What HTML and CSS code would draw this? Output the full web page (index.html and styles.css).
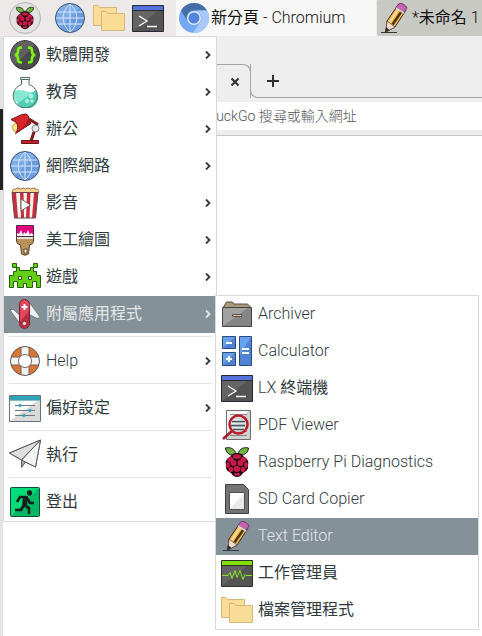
FILE: index.html
```
<!DOCTYPE html>
<html lang="zh-Hant">
<head>
    <meta charset="UTF-8">
    <meta name="viewport" content="width=device-width, initial-scale=1.0">
    <title>Raspberry Pi Desktop</title>
    <link rel="stylesheet" href="styles.css">
</head>
<body>
    <!-- Icons -->
    <svg class="sprite" aria-hidden="true">
        <symbol id="i-raspberry" viewBox="0 0 32 32">
            <path d="M15.500 8.500C10 10 5 8 4.500 2c4-1 9 0 11 6.500zM16.500 8.500C22 10 27 8 27.500 2c-4-1-9 0-11 6.500z" fill="#72b048" stroke="#17240f"/>
            <path d="M16 7c4 0 6 2 7 4 4 2 5 5 4 8 1 5-3 7-5 8-2 3-4 4-6 4s-4-1-6-4c-2-1-6-3-5-8-1-3 0-6 4-8 1-2 3-4 7-4z" fill="#26040f"/>
            <g fill="#c51a4a">
                <ellipse cx="16" cy="10.500" rx="4" ry="2.300"/>
                <ellipse cx="9.500" cy="13.500" rx="3" ry="2.500"/>
                <ellipse cx="22.500" cy="13.500" rx="3" ry="2.500"/>
                <ellipse cx="12.500" cy="17" rx="3" ry="3"/>
                <ellipse cx="19.500" cy="17" rx="3" ry="3"/>
                <ellipse cx="7" cy="19" rx="1.800" ry="3"/>
                <ellipse cx="25" cy="19" rx="1.800" ry="3"/>
                <ellipse cx="16" cy="23" rx="3.400" ry="3"/>
                <ellipse cx="10" cy="23.500" rx="2.200" ry="2.800"/>
                <ellipse cx="22" cy="23.500" rx="2.200" ry="2.800"/>
                <ellipse cx="16" cy="28.300" rx="3" ry="1.500"/>
            </g>
        </symbol>
        <symbol id="i-globe" viewBox="0 0 32 32">
            <circle cx="16" cy="16" r="14.500" fill="#6b9bdd"/>
            <path d="M5.500 26A14.500 14.500 0 0 1 26 5.500z" fill="#7fade8"/>
            <path d="M16 2v28M2 16h28M4 10h24M4 22h24M16 2c-9 8-9 20 0 28M16 2c9 8 9 20 0 28" fill="none" stroke="#d7e6fa"/>
            <circle cx="16" cy="16" r="14.500" fill="none" stroke="#3c5878"/>
        </symbol>
        <symbol id="i-folders" viewBox="0 0 32 32">
            <g fill="#f9dd94" stroke="#d3b879">
                <path d="M.5 3.500H5l2 2h16.500v18H.5z"/>
                <path d="M8.500 9.500H13l2 2h16.500v17h-23z"/>
            </g>
        </symbol>
        <symbol id="i-terminal" viewBox="0 0 32 32">
            <path d="M.5 3.500h31v26H.5z" fill="#545454"/>
            <path d="M1 29L27 8H1z" fill="#656565"/>
            <path d="M.5 3.500h31v5H.5z" fill="#5673dc"/>
            <path d="M.5 3.500h31v26H.5zM1 8.500h30" fill="none" stroke="#282b35"/>
            <path d="M7 14l8 5-8 5M15 24.500h10" fill="none" stroke="#fff" stroke-width="1.300"/>
        </symbol>
        <symbol id="i-chromium" viewBox="0 0 32 32">
            <circle cx="16" cy="16" r="15" fill="#75a7f3"/>
            <path d="M3 8.500A15 15 0 0 1 29 8.500H16a7.500 7.500 0 0 0-7.200 9.500z" fill="#446ea8"/>
            <path d="M29 8.500A15 15 0 0 1 15 31l7.500-11.500A7.500 7.500 0 0 0 16 8.500z" fill="#a9c9fb"/>
            <circle cx="16" cy="16" r="7" fill="#dce8fb"/>
            <circle cx="16" cy="16" r="5.500" fill="#5283de"/>
        </symbol>
        <symbol id="i-pencil" viewBox="0 0 32 32">
            <path d="M2 30.500h16" stroke="#34383a"/>
            <path d="M8 19L19 3l8 5-11 17-9 5z" fill="#f2b850" stroke="#3a2a1c"/>
            <path d="M13.500 22.500l11-16" stroke="#4a3216" stroke-width="2.500"/>
            <path d="M10.500 20.500l10-15" stroke="#ffdc93" stroke-width="2"/>
            <path d="M8 19l8 6-9 5z" fill="#f1dccb" stroke="#5b4634" stroke-width=".7"/>
            <path d="M7 25l3.500 3-4.500 2.500z" fill="#292a2c"/>
            <path d="M17 5.500l2-3q2-2 5-.5t4 4l-3 4.500z" fill="#c763b1" stroke="#713562"/>
            <path d="M17 6l8 5" stroke="#d5d7cf" stroke-width="1.500"/>
        </symbol>
        <symbol id="i-code" viewBox="0 0 32 32">
            <circle cx="16" cy="16" r="14.500" fill="#4a4a4a" stroke="#303030"/>
            <path d="M6 26A14 14 0 0 1 26 6z" fill="#606060"/>
            <path d="M13 8.500c-4 0-4 1-4 4 0 2-.5 3-3 3.500 2.500.5 3 1.500 3 3.500 0 3 0 4 4 4M19 8.500c4 0 4 1 4 4 0 2 .5 3 3 3.500-2.500.5-3 1.500-3 3.500 0 3 0 4-4 4" fill="none" stroke="#7af50c" stroke-width="2.600"/>
        </symbol>
        <symbol id="i-flask" viewBox="0 0 32 32">
            <path d="M12.500 4v4.500A12 12 0 1 0 20 8.500V4" fill="#fff"/>
            <path d="M5 15q5-2 11 0t11 0A11.500 11.500 0 1 1 5 15z" fill="#86ead3"/>
            <path d="M8 28L27 14A11.500 11.500 0 0 1 8 28z" fill="#55cfb4"/>
            <path d="M12.500 4v4.500A12 12 0 1 0 20 8.500V4M11.500 1.500h9v2h-9z" fill="none" stroke="#4c6b66"/>
            <g fill="#a9f1df" stroke="#d7fff5" stroke-width=".5"><circle cx="22" cy="20" r="2"/><circle cx="18" cy="25" r="1.700"/><circle cx="23" cy="25" r="1.300"/></g>
        </symbol>
        <symbol id="i-lamp" viewBox="0 0 32 32">
            <path d="M20 6l8 5-2 5-4 12" fill="none" stroke="#7e1c20" stroke-width="3"/>
            <circle cx="8" cy="14.500" r="4.500" fill="#ffe986" stroke="#ab974b"/>
            <path d="M2 6.500L13 1.500q5-1.500 6 1l3 8L6.500 20.500q4-6 1-11z" fill="#d62529" stroke="#741619"/>
            <path d="M7 20L21.500 10.500l-2-5q-3 8-12.500 14z" fill="#a51d21"/>
            <circle cx="26.500" cy="15.500" r="3.500" fill="#e9e9e9" stroke="#7e8082"/>
            <path d="M12.500 27.500h17v3h-17z" fill="#c52428" stroke="#67161a"/>
        </symbol>
        <symbol id="i-popcorn" viewBox="0 0 32 32">
            <path d="M3.500 6q-1-4 3-4 2-2 5 0 3-2 5 0 3-2 5 0 3-2 5 0 4 0 3 4z" fill="#f7d597" stroke="#987046"/>
            <path d="M3 5.500h26L26.500 31h-21z" fill="#faf4ef"/>
            <path d="M3 5.500h4L9 31H5.500zM11 5.500h3.500L15 31h-3zM18 5.500h3.500L20.500 31H17zM25 5.500h4L26.500 31H23z" fill="#c72e3d"/>
            <path d="M3 5.500h26L26.500 31h-21z" fill="none" stroke="#694347"/>
            <path d="M12 12l9.500 6-9.500 6z" fill="#fff" stroke="#6d6261"/>
        </symbol>
        <symbol id="i-brush" viewBox="0 0 32 32">
            <path d="M7.500 12h17v5q0 3-4 4l-1 9q-3.500 2.500-7 0l-1-9q-4-1-4-4z" fill="#b9915d" stroke="#5b432a"/>
            <path d="M7.500 1.500h17v11h-17z" fill="#fff" stroke="#522943"/>
            <path d="M8 2h16v8l-2-1-1 2-2-5-2 4-2-2-1 3-2-5-2 4-2-1z" fill="#e20080"/>
            <path d="M8 13h16v2H8z" fill="#e4ded4"/>
            <path d="M15 25h3v4h-3z" fill="#fff" stroke="#5b432a"/>
        </symbol>
        <symbol id="i-invader" viewBox="0 0 32 32">
            <path d="M3.500 2.500h4v4h3v3h11v-3h3v-4h4v4h-4v4h3v4h4v12h-4v-6h-4v6h-6v-4h-3v4h-6v-6h-4v6h-4v-12h4v-4h3v-4h-4z" fill="#63cf18" stroke="#286009"/>
            <path d="M9.500 15.500h3v3h-3zM19.500 15.500h3v3h-3z" fill="#fff" stroke="#275b0b"/>
        </symbol>
        <symbol id="i-knife" viewBox="0 0 32 32">
            <path d="M.5 11.500h4l7 6.500v8.500zM20 4l11.500 15.500-3.500 1-8-4z" fill="#edf0f1" stroke="#71797e"/>
            <rect x="10.500" y="1.500" width="10" height="29" rx="5" fill="#e2475b" stroke="#76222d"/>
            <path d="M11 24l9-11v13q-1 4-5 4-3 0-4-4z" fill="#b52e40"/>
            <path d="M15.500 6v6M12.500 9h6" stroke="#fff" stroke-width="2"/>
            <circle cx="15.500" cy="25.500" r="1.700" fill="#e6dcdc"/>
        </symbol>
        <symbol id="i-lifebuoy" viewBox="0 0 32 32">
            <circle cx="16" cy="16" r="10.500" fill="none" stroke="#d87537" stroke-width="8"/>
            <path d="M12 1.500h8v9h-8zM12 21.500h8v9h-8zM1.500 12h9v8h-9zM21.500 12h9v8h-9z" fill="#f3f3f1"/>
            <path d="M12 2v9M20 2v9M12 21v9M20 21v9M2 12h9M2 20h9M21 12h9M21 20h9" stroke="#756458"/>
            <circle cx="16" cy="16" r="14.500" fill="none" stroke="#625b56"/>
            <circle cx="16" cy="16" r="6.500" fill="#fff" stroke="#736b65"/>
        </symbol>
        <symbol id="i-prefs" viewBox="0 0 32 32">
            <path d="M.5 3.500h31v26H.5z" fill="#dadada"/>
            <path d="M1 29L28 9H1z" fill="#fff"/>
            <path d="M.5 3.500h31v5H.5z" fill="#31a1b9"/>
            <path d="M.5 3.500h31v26H.5z" fill="none" stroke="#65757a"/>
            <path d="M6 13.500h20M6 18.500h20M6 23.500h20" stroke="#68777b"/>
            <circle cx="11" cy="13.500" r="1.700" fill="#34a8c1"/><circle cx="21" cy="18.500" r="1.700" fill="#34a8c1"/><circle cx="15" cy="23.500" r="1.700" fill="#34a8c1"/>
        </symbol>
        <symbol id="i-plane" viewBox="0 0 32 32">
            <path d="M31.500 1L.5 14l12 7 14 7z" fill="#f1f1f1" stroke="#565656"/>
            <path d="M31.500 1l-19 20v7.500l4-5.500" fill="#aaa" stroke="#565656"/>
            <path d="M31.500 1l-19 20 14 7z" fill="#f3f3f3" stroke="#565656"/>
            <path d="M31.500 1l-19 20L.5 14z" fill="#ddd" stroke="#565656"/>
        </symbol>
        <symbol id="i-exit" viewBox="0 0 32 32">
            <rect x="1.500" y="1.500" width="29" height="29" rx="1" fill="#00b863"/>
            <path d="M2 30V2h28z" fill="#00dc78"/>
            <rect x="1.500" y="1.500" width="29" height="29" rx="1" fill="none" stroke="#154b35"/>
            <circle cx="20.500" cy="7" r="2.700" fill="#12231d"/>
            <path d="M17 11l-6 0-3 5M17 11l-2 8 5 3v6M15 19l-3 5H6M18 12l3 5h4" fill="none" stroke="#12231d" stroke-width="2.700"/>
            <path d="M14 10h5l-1 10h-5z" fill="#12231d"/>
        </symbol>
        <symbol id="i-archive" viewBox="0 0 32 32">
            <path d="M2.500 9l3-5h6l1 2h14l3 3v5h-27z" fill="#aa9a7c" stroke="#544b3c"/>
            <path d="M1.500 9.500h29v19h-29z" fill="#858585"/>
            <path d="M2 28L27 10H2z" fill="#a2a2a2"/>
            <path d="M1.500 9.500h29v19h-29z" fill="none" stroke="#444"/>
            <path d="M11.500 16.500h9v2h-9z" fill="#d2c3a0" stroke="#5f5542"/>
        </symbol>
        <symbol id="i-calc" viewBox="0 0 32 32">
            <path d="M1.500 1.500h13v12h-13zM1.500 17.500h13v13h-13zM18.500 1.500h12v29h-12z" fill="#4f82d2"/>
            <path d="M2 13V2h12zM2 30V18h12zM19 20V2h11z" fill="#68a0ee"/>
            <path d="M1.500 1.500h13v12h-13zM1.500 17.500h13v13h-13zM18.500 1.500h12v29h-12z" fill="none" stroke="#254b82"/>
            <path d="M5 8h6M5 24h6M8 21v6M21 14h7M21 18h7" stroke="#fff" stroke-width="2"/>
        </symbol>
        <symbol id="i-pdf" viewBox="0 0 32 32">
            <path d="M5.500 1.500h24v29h-24z" fill="#d2d2d2" stroke="#6d6d6d"/>
            <path d="M6 28V2h21z" fill="#f7f7f7"/>
            <path d="M9 5.500h17M9 9.500h17M9 13.500h17M9 17.500h17M9 22.500h17M9 26.500h17" stroke="#858585"/>
            <circle cx="17.500" cy="15.500" r="9" fill="#e3eaeb" fill-opacity=".7"/>
            <path d="M11 12.500h13M10 16.500h14M12 20.500h11" stroke="#48535b" stroke-width="1.500"/>
            <path d="M11 22l-9 8" stroke="#a91c26" stroke-width="2.600"/>
            <circle cx="17.500" cy="15.500" r="9" fill="none" stroke="#bd1d29" stroke-width="2.500"/>
        </symbol>
        <symbol id="i-sd" viewBox="0 0 32 32">
            <path d="M4.500 1.500h18l5 5v24h-23z" fill="#747474" stroke="#404040"/>
            <path d="M8.500 9.500h15v17h-15z" fill="#e9e9e9" stroke="#505050"/>
            <path d="M9 26V10h14z" fill="#fff"/>
        </symbol>
        <symbol id="i-monitor" viewBox="0 0 32 32">
            <path d="M.5 3.500h31v26H.5z" fill="#545454"/>
            <path d="M1 29L27 8H1z" fill="#646464"/>
            <path d="M.5 3.500h31v5H.5z" fill="#82de0c"/>
            <path d="M.5 3.500h31v26H.5zM1 8.500h30" fill="none" stroke="#293024"/>
            <path d="M1 18.500h6l2-3 2 6 3-8 2 7 3-7 3 9 2-5 1 1h6" fill="none" stroke="#86e916"/>
        </symbol>
        <symbol id="i-arrow" viewBox="0 0 8 8">
            <path d="M2 .5L5.500 4 2 7.500" fill="none" stroke="currentColor" stroke-width="1.800"/>
        </symbol>
    </svg>

    <header class="taskbar">
        <nav class="launchers">
            <button class="start" aria-label="Menu"><svg class="berry"><use href="#i-raspberry"/></svg></button>
            <button aria-label="Web Browser"><svg class="icon"><use href="#i-globe"/></svg></button>
            <button aria-label="File Manager"><svg class="icon"><use href="#i-folders"/></svg></button>
            <button aria-label="Terminal"><svg class="icon"><use href="#i-terminal"/></svg></button>
        </nav>
        <button class="task"><svg class="icon"><use href="#i-chromium"/></svg><span><span class="zh">新分頁</span> - Chromium</span></button>
        <button class="task active"><svg class="icon"><use href="#i-pencil"/></svg><span>*<span class="zh">未命名</span> 1</span></button>
    </header>

    <main class="desktop">
        <section class="browser">
            <div class="tabs">
                <div class="tab">
                    <button aria-label="Close tab"><svg class="glyph" viewBox="0 0 12 12"><path d="M2.500 2.500l7 7M9.500 2.500l-7 7"/></svg></button>
                </div>
                <div class="tab-rest">
                    <button aria-label="New tab"><svg class="glyph" viewBox="0 0 12 12"><path d="M6 0v12M0 6h12"/></svg></button>
                </div>
            </div>
            <div class="toolbar">
                <input class="address" type="text" aria-label="網址" placeholder="DuckGo 搜尋或輸入網址">
            </div>
            <div class="page"></div>
        </section>

        <ul class="menu main-menu">
            <li><button><svg class="icon"><use href="#i-code"/></svg><span class="zh">軟體開發</span><svg class="arrow"><use href="#i-arrow"/></svg></button></li>
            <li><button><svg class="icon"><use href="#i-flask"/></svg><span class="zh">教育</span><svg class="arrow"><use href="#i-arrow"/></svg></button></li>
            <li><button><svg class="icon"><use href="#i-lamp"/></svg><span class="zh">辦公</span><svg class="arrow"><use href="#i-arrow"/></svg></button></li>
            <li><button><svg class="icon"><use href="#i-globe"/></svg><span class="zh">網際網路</span><svg class="arrow"><use href="#i-arrow"/></svg></button></li>
            <li><button><svg class="icon"><use href="#i-popcorn"/></svg><span class="zh">影音</span><svg class="arrow"><use href="#i-arrow"/></svg></button></li>
            <li><button><svg class="icon"><use href="#i-brush"/></svg><span class="zh">美工繪圖</span><svg class="arrow"><use href="#i-arrow"/></svg></button></li>
            <li><button><svg class="icon"><use href="#i-invader"/></svg><span class="zh">遊戲</span><svg class="arrow"><use href="#i-arrow"/></svg></button></li>
            <li><button class="selected"><svg class="icon"><use href="#i-knife"/></svg><span class="zh">附屬應用程式</span><svg class="arrow"><use href="#i-arrow"/></svg></button></li>
            <li class="group"><button><svg class="icon"><use href="#i-lifebuoy"/></svg>Help<svg class="arrow"><use href="#i-arrow"/></svg></button></li>
            <li class="group"><button><svg class="icon"><use href="#i-prefs"/></svg><span class="zh">偏好設定</span><svg class="arrow"><use href="#i-arrow"/></svg></button></li>
            <li class="group"><button><svg class="icon"><use href="#i-plane"/></svg><span class="zh">執行</span></button></li>
            <li class="group"><button><svg class="icon"><use href="#i-exit"/></svg><span class="zh">登出</span></button></li>
        </ul>

        <ul class="menu sub-menu">
            <li><button><svg class="icon"><use href="#i-archive"/></svg>Archiver</button></li>
            <li><button><svg class="icon"><use href="#i-calc"/></svg>Calculator</button></li>
            <li><button><svg class="icon"><use href="#i-terminal"/></svg><span>LX <span class="zh">終端機</span></span></button></li>
            <li><button><svg class="icon"><use href="#i-pdf"/></svg>PDF Viewer</button></li>
            <li><button><svg class="icon"><use href="#i-raspberry"/></svg>Raspberry Pi Diagnostics</button></li>
            <li><button><svg class="icon"><use href="#i-sd"/></svg>SD Card Copier</button></li>
            <li><button class="selected"><svg class="icon"><use href="#i-pencil"/></svg>Text Editor</button></li>
            <li><button><svg class="icon"><use href="#i-monitor"/></svg><span class="zh">工作管理員</span></button></li>
            <li><button><svg class="icon"><use href="#i-folders"/></svg><span class="zh">檔案管理程式</span></button></li>
        </ul>
    </main>
</body>
</html>
```
FILE: styles.css
```
* {
    box-sizing: border-box;
}

body {
    margin: 0;
    min-height: 100vh;
    display: flex;
    flex-direction: column;
    overflow: hidden;
    font-family: Roboto, "Noto Sans CJK TC", sans-serif;
    font-size: 16px;
    font-weight: 300;
    line-height: 20px;
    color: #2f3a3e;
    background-color: #fff;
}

button {
    font: inherit;
    color: inherit;
    background: none;
    border: 0;
    padding: 0;
    display: flex;
    align-items: center;
}

.zh {
    font-weight: 400;
}

.sprite {
    position: absolute;
    width: 0;
    height: 0;
}

.icon {
    width: 32px;
    height: 32px;
    flex: none;
}

/* Taskbar */

.taskbar {
    display: flex;
    height: 36px;
    background-color: #ede9e8;
    overflow: hidden;
}

.launchers {
    flex: none;
    display: flex;
    align-items: center;
    gap: 7px;
    padding: 0 12px 0 9px;
}

.start {
    width: 32px;
    height: 32px;
    margin-right: 6px;
    justify-content: center;
    background-color: #e2e2e2;
    border: 1px solid #b3b3b3;
    border-radius: 50%;
}

.berry {
    width: 24px;
    height: 26px;
}

.task {
    flex: 0 0 200px;
    gap: 1px;
    padding: 0 2px;
    color: #111;
    background-color: #f8f7f7;
    white-space: nowrap;
}

.task.active {
    margin-left: 1px;
    background-color: #c9c9c4;
    border-radius: 2px;
}

/* Browser window */

.desktop {
    position: relative;
    flex: 1;
    display: flex;
    background: linear-gradient(#e4e4e4 73px, #222 73px, #222 154px, #e4e4e4 154px);
}

.browser {
    flex: 1;
    margin-left: 3px;
    display: flex;
    flex-direction: column;
    background-color: #eee;
}

.tabs {
    display: flex;
    height: 62px;
    padding-top: 28px;
}

.tab {
    flex: 0 0 248px;
    display: flex;
    align-items: center;
    justify-content: flex-end;
    padding-right: 9px;
    border: 1px solid #a3a3a3;
    border-width: 1px 1px 0 0;
    border-radius: 0 8px 0 0;
}

.tab-rest {
    flex: 1;
    display: flex;
    align-items: center;
    padding-left: 16px;
    margin-left: -1px;
    border: 1px solid #a3a3a3;
    border-width: 0 0 1px 1px;
    border-radius: 0 0 0 8px;
}

.glyph {
    width: 12px;
    height: 12px;
    fill: none;
    stroke: #2b3235;
    stroke-width: 2;
}

.toolbar {
    padding: 4px 0 5px;
    border-bottom: 1px solid #c4c4c4;
}

.address {
    display: block;
    width: 100%;
    height: 28px;
    padding: 0 0 0 204px;
    border: 0;
    font: inherit;
    font-size: 14px;
    background-color: #fff;
}

.address::placeholder {
    color: #555;
}

.page {
    flex: 1;
    background-color: #fff;
}

/* Menus */

.menu {
    position: absolute;
    margin: 0;
    padding: 0;
    list-style: none;
    background-color: #fff;
    border: 1px solid #d9dada;
}

.main-menu {
    top: 0;
    left: 3px;
    width: 214px;
}

.sub-menu {
    top: 259px;
    left: 215px;
    width: 264px;
}

.menu button {
    width: 100%;
    height: 37px;
    gap: 5px;
    padding: 0 4px 1px 5px;
    text-align: left;
}

.menu .selected {
    color: #e4e8ea;
    background-color: #859198;
}

.arrow {
    width: 8px;
    height: 8px;
    margin-left: auto;
}

.group::before {
    content: "";
    display: block;
    height: 1px;
    margin: 3px 4px 6px 5px;
    background-color: #e3e4e4;
}
```
